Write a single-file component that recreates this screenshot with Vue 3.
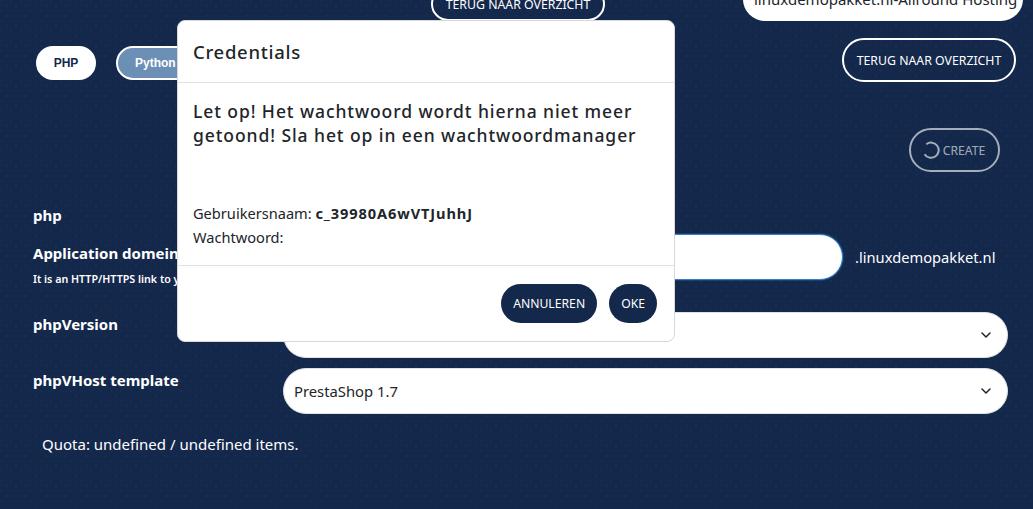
<script setup>
const rows = [
  { label: 'phpVersion', value: '' },
  { label: 'phpVHost template', value: 'PrestaShop 1.7' },
]
</script>

<template>
  <div class="page">
    <header class="top">
      <button class="outline back-top">TERUG NAAR OVERZICHT</button>
      <div class="account">linuxdemopakket.nl-Allround Hosting</div>
    </header>

    <div class="bar">
      <nav class="tabs">
        <span class="tab active">PHP</span>
        <span class="tab">Python</span>
      </nav>
      <button class="outline back">TERUG NAAR OVERZICHT</button>
    </div>

    <div class="actions">
      <button class="outline create">
        <svg class="spin" width="18" height="18" viewBox="0 0 18 18" fill="none">
          <path d="M4.4 3.2A7.6 7.6 0 1 1 2.6 13.2" stroke="currentColor" stroke-width="2" />
        </svg>
        CREATE
      </button>
    </div>

    <section class="form">
      <h3 class="type">php</h3>
      <div class="domain-row">
        <div class="domain-label">
          <h3>Application domein</h3>
          <p>It is an HTTP/HTTPS link to your application</p>
        </div>
        <div class="domain-input"></div>
        <span class="suffix">.linuxdemopakket.nl</span>
      </div>
      <div v-for="row in rows" :key="row.label" class="select-row">
        <h3>{{ row.label }}</h3>
        <div class="select">
          <span>{{ row.value }}</span>
          <svg width="12" height="12" viewBox="0 0 12 12" fill="none">
            <path d="M2 4l4 4 4-4" stroke="#212529" stroke-width="1.5" stroke-linecap="round" stroke-linejoin="round" />
          </svg>
        </div>
      </div>
      <p class="quota">Quota: undefined / undefined items.</p>
    </section>

    <div class="dialog">
      <div class="dialog-head">Credentials</div>
      <div class="dialog-body">
        <p class="warning">Let op! Het wachtwoord wordt hierna niet meer getoond! Sla het op in een wachtwoordmanager</p>
        <p class="cred">Gebruikersnaam: <b>c_39980A6wVTJuhhJ</b></p>
        <p class="cred">Wachtwoord:</p>
      </div>
      <div class="dialog-foot">
        <button class="solid">ANNULEREN</button>
        <button class="solid">OKE</button>
      </div>
    </div>
  </div>
</template>

<style scoped>
.page {
  position: relative;
  width: 1033px;
  height: 509px;
  overflow: hidden;
  box-sizing: border-box;
  padding: 0 10px 0 33px;
  font-family: "Noto Sans", "Open Sans", sans-serif;
  color: #fff;
  background-color: #14284b;
  background-image:
    radial-gradient(circle at 1px 1px, #182e53 0.7px, transparent 1px),
    radial-gradient(circle at 1px 1px, #182e53 0.7px, transparent 1px);
  background-size: 10px 10px;
  background-position: 0 0, 5px 5px;
}
button {
  font-family: inherit;
  box-sizing: border-box;
  padding: 0;
}
.top {
  display: flex;
  justify-content: space-between;
  align-items: flex-end;
  height: 21px;
  padding-left: 398px;
}
.outline {
  background: transparent;
  border: 2px solid #fff;
  border-radius: 22px;
  color: #fff;
  font-size: 12.3px;
  height: 44px;
  white-space: nowrap;
}
.back-top {
  width: 174px;
  height: 34px;
  flex: none;
}
.account {
  width: 280px;
  height: 44px;
  flex: none;
  box-sizing: border-box;
  background: #fff;
  color: #212529;
  border-radius: 22px;
  font-size: 15px;
  padding-left: 11px;
  white-space: nowrap;
  overflow: hidden;
  display: flex;
  align-items: center;
}
.bar {
  display: flex;
  justify-content: space-between;
  align-items: flex-start;
  padding-top: 17px;
  padding-right: 7px;
}
.tabs {
  display: flex;
  gap: 20px;
  margin: 8px 0 0 3px;
}
.tab {
  width: 60px;
  height: 34px;
  box-sizing: border-box;
  border-radius: 17px;
  border: 2px solid #fff;
  background: #6c8fb5;
  color: #fff;
  font: bold 12px/30px "Liberation Sans", Arial, sans-serif;
  text-align: center;
}
.tab.active {
  background: #fff;
  color: #14284b;
}
.tab:not(.active) {
  width: 120px;
  text-align: left;
  padding-left: 17px;
}
.back {
  width: 174px;
}
.actions {
  display: flex;
  justify-content: flex-end;
  padding: 46px 23px 0 0;
}
.create {
  width: 91px;
  height: 44px;
  color: rgba(255, 255, 255, 0.62);
  border-color: rgba(255, 255, 255, 0.62);
  display: flex;
  align-items: center;
  justify-content: center;
  gap: 3px;
  font-size: 12.2px;
  padding-right: 2px;
}
h3 {
  margin: 0;
  font-size: 15px;
  font-weight: 700;
  line-height: 20px;
}
.type {
  margin-top: 33px;
}
.domain-row {
  display: flex;
  align-items: flex-start;
  margin-top: 9px;
}
.domain-label {
  width: 250px;
  padding-top: 9px;
  flex: none;
}
.domain-label p {
  margin: 9px 0 0;
  font-size: 10.7px;
  font-weight: 600;
  line-height: 14px;
  white-space: nowrap;
}
.domain-input {
  width: 560px;
  height: 46px;
  box-sizing: border-box;
  flex: none;
  background: #fff;
  border: 1px solid #2f7fd1;
  border-radius: 23px;
  box-shadow: 0 0 0 1px rgba(47, 127, 209, 0.25);
}
.suffix {
  margin-left: 12px;
  font-size: 14.7px;
  line-height: 46px;
  white-space: nowrap;
}
.select-row {
  display: flex;
  align-items: flex-start;
  margin-top: 10px;
}
.domain-row + .select-row {
  margin-top: 26px;
}
.select-row h3 {
  width: 250px;
  flex: none;
  padding-top: 2px;
}
.select {
  width: 725px;
  height: 46px;
  box-sizing: border-box;
  flex: none;
  background: #fff;
  border: 1px solid #dee2e6;
  border-radius: 23px;
  color: #212529;
  font-size: 14.8px;
  display: flex;
  align-items: center;
  justify-content: space-between;
  padding: 0 15px 0 10px;
}
.quota {
  margin: 19px 0 0 9px;
  font-size: 15px;
  line-height: 22px;
}
.dialog {
  position: absolute;
  left: 177px;
  top: 20px;
  width: 498px;
  height: 322px;
  box-sizing: border-box;
  background: #fff;
  border: 1px solid #d8d8d8;
  border-radius: 8px;
  color: #212529;
  display: flex;
  flex-direction: column;
}
.dialog-head {
  height: 62px;
  box-sizing: border-box;
  padding: 1px 15px 0;
  border-bottom: 1px solid #dee2e6;
  font-size: 18.5px;
  font-weight: 500;
  letter-spacing: 0.7px;
  line-height: 60px;
}
.dialog-body {
  flex: 1;
  padding: 16px 15px 0;
}
.warning {
  margin: 0 0 54px;
  font-size: 17.5px;
  font-weight: 500;
  letter-spacing: 0.92px;
  line-height: 24px;
}
.cred {
  margin: 0;
  font-size: 14.6px;
  line-height: 24px;
}
.cred b {
  font-weight: 700;
  letter-spacing: 0.9px;
}
.dialog-foot {
  height: 76px;
  box-sizing: border-box;
  border-top: 1px solid #dee2e6;
  display: flex;
  justify-content: flex-end;
  align-items: flex-start;
  gap: 12px;
  padding: 18px 17px 0 0;
}
.solid {
  height: 39px;
  padding: 0 12px;
  border: 0;
  border-radius: 20px;
  background: #14284b;
  color: #fff;
  font-size: 12.2px;
}
</style>
